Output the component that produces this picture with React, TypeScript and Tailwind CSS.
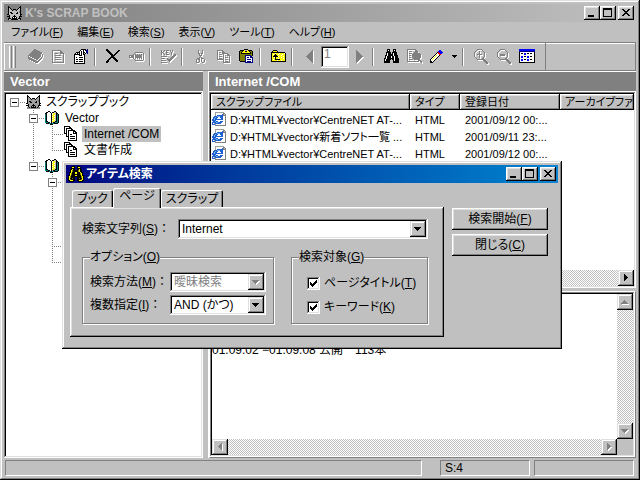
import type { ReactNode } from "react";
import clsx from "clsx";

const raised =
  "bg-[#c0c0c0] shadow-[inset_-1px_-1px_#000,inset_1px_1px_#fff,inset_-2px_-2px_#808080,inset_2px_2px_#dfdfdf]";
const frame =
  "bg-[#c0c0c0] shadow-[inset_-1px_-1px_#000,inset_1px_1px_#dfdfdf,inset_-2px_-2px_#808080,inset_2px_2px_#fff]";
const sunken =
  "p-[2px] shadow-[inset_-1px_-1px_#fff,inset_1px_1px_#808080,inset_-2px_-2px_#dfdfdf,inset_2px_2px_#000]";
const track =
  "bg-[repeating-conic-gradient(#c0c0c0_0_25%,#fff_0_50%)] bg-[length:2px_2px]";

const palette: Record<string, string> = {
  k: "#000000",
  g: "#808080",
  s: "#c0c0c0",
  a: "#a0a0a0",
  w: "#ffffff",
  y: "#ffff00",
  o: "#808000",
  b: "#0000ff",
  n: "#000080",
  r: "#ff0000",
  t: "#008080",
  l: "#6fb4f0",
  e: "#1f5fd0",
};

function PixelIcon({ rows, embossed }: { rows: string[]; embossed?: boolean }) {
  const width = Math.max(...rows.map((r) => r.length)) + 1;
  const height = rows.length + 1;
  const draw = (shift: number, color?: string) =>
    rows.flatMap((row, y) =>
      [...row].map((c, x) =>
        palette[c] ? (
          <rect
            key={`${shift}-${x}-${y}`}
            x={x + shift}
            y={y + shift}
            width="1"
            height="1"
            fill={color ?? palette[c]}
          />
        ) : null
      )
    );
  return (
    <svg
      width={width}
      height={height}
      viewBox={`0 0 ${width} ${height}`}
      shapeRendering="crispEdges"
      className="block shrink-0"
      aria-hidden="true"
    >
      {embossed && draw(1, "#ffffff")}
      {draw(0)}
    </svg>
  );
}

const icons = {
  cat: [
    ".k...........k.",
    ".kk.........kk.",
    ".ksk.......ksk.",
    ".kssk.kkk.kssk.",
    ".kssskgsgksssk.",
    ".kssssssssssgk.",
    ".kskksssssksgk.",
    ".ksskkssskkssk.",
    "kkssssssssssskk",
    "..kssssksssssk.",
    "kkkssskkkssskkk",
    "..ksskwkwkssk..",
    ".kkkskkkkkskkk.",
    ".ksskkkkkkkssk.",
  ],
  catTree: [
    ".k...........k.",
    ".kk.........kk.",
    ".kak.......kak.",
    ".kaak.kkk.kaak.",
    ".kaaakgagkaaak.",
    ".kaaaaaaaaaagk.",
    ".kakkaaaaakagk.",
    ".kaakkaaakkaak.",
    "kkaaaaaaaaaaakk",
    "..kaaaakaaaaak.",
    "kkkaaakkkaaakkk",
    "..kaakakakaak..",
    ".ggkakkkkkakgg.",
    ".gaagggggggaag.",
  ],
  book: [
    "......gg.......",
    ".....ggggg.....",
    "....gggggggg...",
    "...ggggggggggg.",
    "..gggggggggggg.",
    ".gggggggggggg.g",
    "ggggggggggggg.g",
    "g.ggggggggggg.g",
    "gg..gggggggg.g.",
    "gggg..ggggg.gg.",
    ".ggggg..gg.gg..",
    "...ggggg..gg...",
    ".....gggggg....",
    ".......ggg.....",
  ],
  page: [
    "ggggggggg...",
    "g.......gg..",
    "g.......ggg.",
    "g..ggg..gggg",
    "g..........g",
    "g..gggggg..g",
    "g..........g",
    "g..gggggg..g",
    "g..........g",
    "g..gggggg..g",
    "g..........g",
    "g..........g",
    "gggggggggggg",
  ],
  properties: [
    ".......kkkkk.n",
    "......kwwkwknn",
    ".....kwkwkwwnn",
    "..kkkkwkwkkwnn",
    ".kwkwkwkwk.k.n",
    "kkkkkkwkwkk...",
    "kwwwwkkkwwk...",
    "kwwwwwwwwwk...",
    "kwkwwkkkkwk...",
    "kwwwwwwwwwk...",
    "kwkkwkkkkwk...",
    "kwwwwwwwwwk...",
    "kwkkwkkkkwk...",
    "kwwwwwwwwwk...",
    "kkkkkkkkkkk...",
  ],
  cross: [
    "kk............",
    "kkk.........kk",
    ".kkk.......kk.",
    "..kkk.....kk..",
    "...kkk...kk...",
    "....kkk.kk....",
    ".....kkkk.....",
    ".....kkk......",
    "....kkkkk.....",
    "...kk..kkk....",
    "..kk....kkk...",
    ".kk......kkk..",
    "kkk.......kk..",
    "kk............",
  ],
  rename: [
    "......gggggggg.",
    ".....g........g",
    "....g.g.g.g.g.g",
    "ggggg.ggggggg.g",
    "g.ggg.ggggggg.g",
    "ggggg.ggggggg.g",
    "....g.g.g.g.g.g",
    ".....g........g",
    "......gggggggg.",
  ],
  key: [
    "g..g.ggg.g.g...",
    "g.g..g...g.g...",
    "gg...gg...g....",
    "g.g..g....g....",
    "g..g.ggg..g..gg",
    "............ggg",
    "gggggg.....ggg.",
    "..........ggg..",
    "gggg..g..ggg...",
    "......ggggg....",
    "ggggg..ggg.....",
    "........g......",
    "gggggg.........",
  ],
  cut: [
    "..g...g..",
    "..g...g..",
    "..g...g..",
    "..gg.gg..",
    "...g.g...",
    "...ggg...",
    "....g....",
    "...g.g...",
    ".ggg.ggg.",
    "g.gg.g..g",
    "g..g.g..g",
    "g..g.g..g",
    "ggg...gg.",
  ],
  copy: [
    "gggggg.......",
    "g....gg......",
    "g.gg.ggg.....",
    "g....gggggg..",
    "g.ggg.g...gg.",
    "g.....g.g.ggg",
    "g.ggg.g.....g",
    "g.....g.ggg.g",
    "g.ggg.g.....g",
    "ggggggg.ggg.g",
    "......g.....g",
    "......g.ggg.g",
    "......ggggggg",
  ],
  paste: [
    ".....kkkk.....",
    ".kkkky..ykkkk.",
    "kookyykkyykook",
    "kokyyyyyyyykok",
    "kokkkkkkkkkkok",
    "kooooooooooook",
    "kooooonnnnnnok",
    "kooooonwwwwnn.",
    "kooooonwnnwnnn",
    "kooooonwwwwwwn",
    "kooooonwnnnnwn",
    "kooooonwwwwwwn",
    ".kkkkknwnnnnwn",
    "......nnnnnnnn",
  ],
  folderUp: [
    "..kkkk.........",
    ".kyyyyk........",
    "kkkkkkkkkkkkkk.",
    "kyyywyyywyyyywk",
    "kywykyywyyywyyk",
    "kyykkkyyyywyyyk",
    "kykkkkkwyyyywyk",
    "kyywkyyyyywyyyk",
    "kyyykyywyyyywyk",
    "kywykkkkkyyyyyk",
    "kyyyyywyyywyyyk",
    "kkkkkkkkkkkkkkk",
  ],
  prev: [
    "......g",
    ".....gg",
    "....ggg",
    "...gggg",
    "..ggggg",
    ".gggggg",
    "ggggggg",
    ".gggggg",
    "..ggggg",
    "...gggg",
    "....ggg",
    ".....gg",
    "......g",
  ],
  next: [
    "g......",
    "gg.....",
    "ggg....",
    "gggg...",
    "ggggg..",
    "gggggg.",
    "ggggggg",
    "gggggg.",
    "ggggg..",
    "gggg...",
    "ggg....",
    "gg.....",
    "g......",
  ],
  binoculars: [
    "...kkk...kkk...",
    "...kwk...kwk...",
    "...kkk...kkk...",
    "..kkkkk.kkkkk..",
    "..kwkkk.kwkkk..",
    "..kwkkkkkwkkk..",
    ".kkwkkkkkwkkkk.",
    ".kwkkkkwkkwkkk.",
    ".kwkkkkwkkwkkk.",
    "kkwkkkkkkkwkkkk",
    "kwkkkkk.kkwkkkk",
    "kwkkkk...kwkkkk",
    "kkkkkk...kkkkkk",
    "kkkkkk...kkkkkk",
  ],
  binocularsGold: [
    "....kkk..kkk....",
    "...kyyk..kyyk...",
    "...kkkk..kkkk...",
    "..kkykk..kkykk..",
    "..kyokkkkkoykk..",
    "..kyokkkkkoykk..",
    ".kkykkkyykkkykk.",
    ".kyokkkyykkkoyk.",
    ".kyokkkkkkkkoyk.",
    "kkykkkkyykkkkykk",
    "kyokkkkkkkkkkoyk",
    "kyokkkk..kkkkoyk",
    "kykkokk..kkokkyk",
    "kyokkkk..kkkkoyk",
    "kkyyykk..kkyyykk",
    ".kkkkk....kkkkk.",
  ],
  pageFind: [
    "ggggggggg......",
    "g.......gg.....",
    "g.ggg...ggg....",
    "g......gggg....",
    "g.ggg.ggggggg..",
    "g....ggggggggg.",
    "g.gg.ggggggggg.",
    "g....ggggggggg.",
    "g.gg.ggggggggg.",
    "g.....ggggggg..",
    "g.gggg.gggggg..",
    "g..........ggg.",
    "gggggggggggg.gg",
    "..............g",
  ],
  pencil: [
    ".........bb...",
    "........bbbb..",
    ".......krbbbb.",
    "......kwrrbb..",
    ".....kwwwrr...",
    "....kwywwk....",
    "...kwywwk.....",
    "..kwywwk......",
    ".kwywwk.......",
    "kwywwk........",
    "kwwwk.........",
    "kkwk..........",
    "kkk...........",
  ],
  caret: ["kkkkk", ".kkk.", "..k.."],
  zoomIn: [
    "...ggggg.......",
    "..g.....g......",
    ".g...g...g.....",
    "g....g....g....",
    "g....g....g....",
    "g..ggggg..g....",
    "g....g....g....",
    "g....g....g....",
    ".g...g...g.....",
    "..g.....gg.....",
    "...gggggggg....",
    ".........ggg...",
    "..........ggg..",
    "...........ggg.",
    "............gg.",
  ],
  zoomOut: [
    "...ggggg.......",
    "..g.....g......",
    ".g.......g.....",
    "g.........g....",
    "g.........g....",
    "g..ggggg..g....",
    "g..ggggg..g....",
    "g.........g....",
    ".g.......g.....",
    "..g.....gg.....",
    "...gggggggg....",
    ".........ggg...",
    "..........ggg..",
    "...........ggg.",
    "............gg.",
  ],
  grid: [
    "bbbbbbbbbbbbbbbb",
    "bbbbbbbbbbbbbbbb",
    "nnnnnnnnnnnnnnnn",
    "kwwwwwwwwwwwwwwk",
    "kwkkwbbwkkwkkwwk",
    "kwwwwbbwwwwwwwwk",
    "kwwwwwwwwwwwwwwk",
    "kwbbwkkwbbwkkwwk",
    "kwbbwwwwbbwwwwwk",
    "kwwwwwwwwwwwwwwk",
    "kwbbwkkwbbwkkwwk",
    "kwbbwwwwbbwwwwwk",
    "kwwwwwwwwwwwwwwk",
    "kkkkkkkkkkkkkkkk",
  ],
  openBook: [
    "...kk....kk...",
    ".kkwwk.kkssk..",
    "kkwwwwkwyyskk.",
    "tkwwwwkwyysktk",
    "tkwwwwkyywsktk",
    "tkwwwwkwyysktk",
    "tkwwwwkyywsktk",
    "tkwwwwkwyysktk",
    "tkwwwwkyywsktk",
    "tkwwwwkwyysktk",
    "tkkwwwkyyskktk",
    "tttkkwkskktttk",
    ".kkkttkttkkkk.",
    ".....kkk......",
  ],
  pages: [
    "kkkkkk.......",
    "kwwwwkk......",
    "kwkkkkkk.....",
    "kwkwwwwkk....",
    "kwkwkkkkkkk..",
    "kwkwkwwwwkkk.",
    "kwkwkwwwwkwkk",
    "kkkwkwwwwkkkk",
    "..kwkwkkwwwwk",
    "..kwkwwwwwwwk",
    "..kkkwkkkkkwk",
    "....kwwwwwwwk",
    "....kwkkkkkwk",
    "....kwwwwwwwk",
    "....kkkkkkkkk",
  ],
  htmlFile: [
    "...aaaaaaaaa..",
    "...awwwwwwwgg.",
    "...awwwwwwegsg",
    "...aweeeeeeggg",
    "..eeellleeewwg",
    ".eeleewweeewwg",
    ".eleewwwweewwg",
    "eeleeeeeeeewwg",
    "eeeewwwwwwwwwg",
    ".eeleewweeewwg",
    "eeeelleeeewwwg",
    "ewaeeeeeewwwwg",
    "eeeawwwwwwwwwg",
    "...ggggggggggg",
  ],
  minimize: [".......", ".......", ".......", ".......", ".......", "......", "kkkkkk", "kkkkkk"],
  maximize: [
    "kkkkkkkkk",
    "kkkkkkkkk",
    "k.......k",
    "k.......k",
    "k.......k",
    "k.......k",
    "k.......k",
    "k.......k",
    "kkkkkkkkk",
  ],
  close: [
    "kk....kk",
    ".kk..kk.",
    "..kkkk..",
    "...kk...",
    "..kkkk..",
    ".kk..kk.",
    "kk....kk",
  ],
  check: [
    "......k",
    ".....kk",
    "k...kkk",
    "kk.kkk.",
    "kkkkk..",
    ".kkk...",
    "..k....",
  ],
  down: ["kkkkkkk", ".kkkkk.", "..kkk..", "...k..."],
  downGray: ["ggggggg", ".ggggg.", "..ggg..", "...g..."],
  upGray: ["...g...", "..ggg..", ".ggggg.", "ggggggg"],
  leftGray: ["...g", "..gg", ".ggg", "gggg", ".ggg", "..gg", "...g"],
  rightGray: ["g...", "gg..", "ggg.", "gggg", "ggg.", "gg..", "g..."],
  right: ["k...", "kk..", "kkk.", "kkkk", "kkk.", "kk..", "k..."],
};

type IconName = keyof typeof icons;

/* Label with its access key in brackets */
function Mnemonic({ text, k, colon }: { text: string; k: string; colon?: boolean }) {
  return (
    <>
      {text}(<u className="underline-offset-1">{k}</u>)
      {colon && <span className="[font-feature-settings:normal]">：</span>}
    </>
  );
}

function WindowButtons() {
  const buttons: [IconName, string][] = [
    ["minimize", "最小化"],
    ["maximize", "最大化"],
    ["close", "閉じる"],
  ];
  return (
    <div className="flex pr-[2px]">
      {buttons.map(([icon, label]) => (
        <button
          key={icon}
          aria-label={label}
          className={clsx(
            raised,
            "flex h-[14px] w-4 items-center justify-center",
            icon === "close" && "ml-[2px]"
          )}
        >
          <PixelIcon rows={icons[icon]} />
        </button>
      ))}
    </div>
  );
}

function ToolButton({
  icon,
  label,
  off,
  className = "w-[23px]",
}: {
  icon: IconName;
  label: string;
  off?: boolean;
  className?: string;
}) {
  return (
    <button
      aria-label={label}
      disabled={off}
      className={clsx("flex h-[22px] items-center justify-center", className)}
    >
      <PixelIcon rows={icons[icon]} embossed={off} />
    </button>
  );
}

function Separator() {
  return (
    <div className="flex w-[9px] pl-px">
      <div className="h-[18px] w-[2px] border-l border-r border-l-[#808080] border-r-white" />
    </div>
  );
}

function Toolbar() {
  return (
    <div className="h-[29px] border-t border-[#808080]">
      <div className="flex h-7 border-b border-r border-b-[#808080] border-r-[#808080] bg-[#c0c0c0] shadow-[inset_0_1px_#fff]">
        <div className="flex items-center border-l border-r border-l-white border-r-[#808080] pl-1 pr-[6px]">
          <div className="mr-2 flex gap-px">
            <div className="h-[22px] w-[3px] border-l border-r border-l-white border-r-[#808080]" />
            <div className="h-[22px] w-[3px] border-l border-r border-l-white border-r-[#808080]" />
          </div>
          <ToolButton icon="book" label="新規ブック" off />
          <ToolButton icon="page" label="新規ページ" off />
          <ToolButton icon="properties" label="プロパティ" />
          <Separator />
          <ToolButton icon="cross" label="削除" />
          <ToolButton icon="rename" label="名前の変更" off />
          <Separator />
          <ToolButton icon="key" label="キーワード" off />
          <Separator />
          <ToolButton icon="cut" label="切り取り" off />
          <ToolButton icon="copy" label="コピー" off />
          <ToolButton icon="paste" label="貼り付け" />
          <Separator />
          <ToolButton icon="folderUp" label="上へ" />
          <Separator />
          <ToolButton icon="prev" label="前へ" off className="w-[22px]" />
          <div className={clsx(sunken, "h-[22px] w-7 bg-white")}>
            <input
              aria-label="番号"
              defaultValue="1"
              disabled
              className="block h-3 w-full px-px text-xs leading-3 text-[#808080]"
            />
          </div>
          <ToolButton icon="next" label="次へ" off className="w-[22px]" />
          <Separator />
          <ToolButton icon="binoculars" label="検索" />
          <ToolButton icon="pageFind" label="ページ検索" off />
          <ToolButton icon="pencil" label="マーカー" />
          <ToolButton icon="caret" label="マーカーの色" className="w-3" />
          <Separator />
          <ToolButton icon="zoomIn" label="拡大" off />
          <ToolButton icon="zoomOut" label="縮小" off />
          <ToolButton icon="grid" label="一覧" />
        </div>
      </div>
    </div>
  );
}

type Line = "none" | "root" | "through" | "corner" | "open" | "openLast" | "bar";

/* One indent step of the tree: dotted lines and the expand box */
function TreeCell({ line }: { line: Line }) {
  const box = line === "root" || line === "open" || line === "openLast";
  const up = line !== "none" && line !== "root";
  const down = line === "through" || line === "open" || line === "bar";
  const across = line !== "none" && line !== "bar";
  const dots = { stroke: "#808080", strokeDasharray: "1 1" };
  return (
    <svg width="19" height="16" shapeRendering="crispEdges" className="block shrink-0">
      {up && <path d="M7.5 0V8" {...dots} />}
      {down && <path d="M7.5 8V16" {...dots} />}
      {across && <path d="M7 8.5H18" {...dots} />}
      {box && (
        <>
          <rect x="3.5" y="4.5" width="8" height="8" fill="#fff" stroke="#808080" />
          <path d="M5 8.5H10" stroke="#000" />
        </>
      )}
    </svg>
  );
}

const treeRows: { lines: Line[]; icon?: IconName; label?: string; selected?: boolean }[] = [
  { lines: ["root"], icon: "catTree", label: "スクラップブック" },
  { lines: ["none", "open"], icon: "openBook", label: "Vector" },
  { lines: ["none", "bar", "through"], icon: "pages", label: "Internet /COM", selected: true },
  { lines: ["none", "bar", "corner"], icon: "pages", label: "文書作成" },
  { lines: ["none", "openLast"], icon: "openBook" },
  { lines: ["none", "none", "open"] },
  { lines: ["none", "none", "bar"] },
  { lines: ["none", "none", "bar"] },
  { lines: ["none", "none", "bar"] },
  { lines: ["none", "none", "through"] },
  { lines: ["none", "none", "corner"] },
];

function Tree() {
  return (
    <ul className={clsx(sunken, "flex-1 bg-white")}>
      {treeRows.map((row, i) => (
        <li key={i} className="flex h-4 pl-px">
          {row.lines.map((line, j) => (
            <TreeCell key={j} line={line} />
          ))}
          {row.icon && (
            <div className="flex w-[18px] items-center">
              <PixelIcon rows={icons[row.icon]} />
            </div>
          )}
          {row.label && (
            <span className={clsx("px-[2px] leading-4", row.selected && "bg-[#c0c0c0]")}>
              {row.label}
            </span>
          )}
        </li>
      ))}
    </ul>
  );
}

function ScrollButton({ icon, label, off }: { icon: IconName; label: string; off?: boolean }) {
  return (
    <button
      aria-label={label}
      disabled={off}
      className={clsx(frame, "flex size-4 shrink-0 items-center justify-center")}
    >
      <PixelIcon rows={icons[icon]} embossed={off} />
    </button>
  );
}

const files = [
  { name: "D:¥HTML¥vector¥CentreNET AT-...", type: "HTML", date: "2001/09/12 00:..." },
  { name: "D:¥HTML¥vector¥新着ソフト一覧 ...", type: "HTML", date: "2001/09/11 23:..." },
  { name: "D:¥HTML¥vector¥CentreNET AT-...", type: "HTML", date: "2001/09/12 00:..." },
];

function FileList() {
  return (
    <div className={clsx(sunken, "flex h-[196px] flex-col bg-white")}>
      <div className="flex-1 overflow-hidden">
        <table className="w-full table-fixed whitespace-nowrap text-[11px]">
          <colgroup>
            <col className="w-[199px]" />
            <col className="w-[50px]" />
            <col className="w-[100px]" />
            <col />
          </colgroup>
          <thead>
            <tr>
              {["スクラップファイル", "タイプ", "登録日付", "アーカイブファ"].map((h) => (
                <th key={h} className="p-0 pb-px text-left font-normal">
                  <div className={clsx(raised, "h-4 overflow-hidden pl-[5px] leading-4")}>{h}</div>
                </th>
              ))}
            </tr>
          </thead>
          <tbody>
            {files.map((f, i) => (
              <tr key={i} className="h-[17px] leading-4">
                <td className="p-0">
                  <div className="flex items-center gap-[3px] pl-px">
                    <PixelIcon rows={icons.htmlFile} />
                    {f.name}
                  </div>
                </td>
                <td className="p-0 pl-[5px]">{f.type}</td>
                <td className="p-0 pl-[5px]">{f.date}</td>
                <td />
              </tr>
            ))}
          </tbody>
        </table>
      </div>
      <div className={clsx(track, "flex justify-between")}>
        <ScrollButton icon="leftGray" label="左へ" />
        <ScrollButton icon="right" label="右へ" />
      </div>
    </div>
  );
}

function Preview() {
  return (
    <div className="mt-[3px] flex flex-1 flex-col border border-b-[#808080] border-l-white border-r-[#808080] border-t-white">
      <div className={clsx(sunken, "flex flex-1 flex-col bg-white")}>
        <div className="flex flex-1">
          <p className="flex-1 pt-12 leading-4">01.09.02 −01.09.08 公開　113本</p>
          <div className={clsx(track, "flex flex-col justify-between")}>
            <ScrollButton icon="upGray" label="上へ" off />
            <ScrollButton icon="downGray" label="下へ" off />
          </div>
        </div>
        <div className="flex bg-[#c0c0c0] pr-4">
          <div className={clsx(track, "flex flex-1 justify-between")}>
            <ScrollButton icon="leftGray" label="左へ" off />
            <ScrollButton icon="rightGray" label="右へ" off />
          </div>
        </div>
      </div>
    </div>
  );
}

function Caption({ children }: { children: ReactNode }) {
  return (
    <h2 className="h-[21px] border-b border-t border-white bg-[#808080] pl-[6px] text-[13px] font-bold leading-[19px] text-white">
      {children}
    </h2>
  );
}

function Combo({
  id,
  value,
  disabled,
  className,
}: {
  id: string;
  value: string;
  disabled?: boolean;
  className?: string;
}) {
  return (
    <div className={clsx(sunken, "relative flex h-5 bg-white", className)}>
      <select
        id={id}
        disabled={disabled}
        className="h-4 w-full appearance-none bg-white pl-[2px] leading-4 opacity-100 disabled:text-[#808080]"
      >
        <option>{value}</option>
      </select>
      <span
        className={clsx(
          frame,
          "pointer-events-none absolute right-[2px] top-[2px] flex size-4 items-center justify-center"
        )}
      >
        <PixelIcon rows={disabled ? icons.downGray : icons.down} embossed={disabled} />
      </span>
    </div>
  );
}

function Group({
  legend,
  className,
  children,
}: {
  legend: ReactNode;
  className?: string;
  children: ReactNode;
}) {
  return (
    <fieldset
      className={clsx(
        "border border-[#808080] px-[7px] shadow-[1px_1px_#fff,inset_1px_1px_#fff]",
        className
      )}
    >
      <legend className="h-3 bg-[#c0c0c0] leading-3">{legend}</legend>
      {children}
    </fieldset>
  );
}

function CheckBox({ label, k }: { label: string; k: string }) {
  return (
    <label className="flex h-6 items-center gap-1">
      <span className={clsx(sunken, "relative size-[13px] bg-white")}>
        <input type="checkbox" defaultChecked className="peer absolute inset-0 appearance-none" />
        <span className="pointer-events-none absolute left-[3px] top-[3px] hidden peer-checked:block">
          <PixelIcon rows={icons.check} />
        </span>
      </span>
      <span>
        <Mnemonic text={label} k={k} />
      </span>
    </label>
  );
}

function SearchDialog() {
  const tab =
    "bg-[#c0c0c0] text-center shadow-[inset_1px_1px_#fff,inset_-1px_0_#000,inset_-2px_0_#808080]";
  return (
    <section
      role="dialog"
      aria-label="アイテム検索"
      className={clsx(frame, "absolute left-[62px] top-[161px] w-[500px] p-1 pb-3")}
    >
      <header className="flex h-[18px] items-center gap-px bg-gradient-to-r from-[#000080] to-[#1084d0] pl-[2px]">
        <PixelIcon rows={icons.binocularsGold} />
        <h2 className="flex-1 font-bold text-white">アイテム検索</h2>
        <WindowButtons />
      </header>

      <div className="flex items-start gap-2 pl-1 pr-[10px] pt-[5px]">
        <div className="w-[374px]">
          <div role="tablist" className="flex items-end pl-[2px]">
            <button role="tab" className={clsx(tab, "h-[17px] w-[41px] rounded-t-xs")}>
              ブック
            </button>
            <button
              role="tab"
              aria-selected="true"
              className={clsx(tab, "relative -mb-px h-5 w-12 rounded-t-xs pb-1")}
            >
              ページ
            </button>
            <button role="tab" className={clsx(tab, "h-[17px] w-[62px] rounded-t-xs")}>
              スクラップ
            </button>
          </div>
          <div className={clsx(raised, "px-3 pb-[13px] pt-3 pr-4")}>
            <div className="flex items-center">
              <label htmlFor="keyword" className="w-24 whitespace-nowrap">
                <Mnemonic text="検索文字列" k="S" colon />
              </label>
              <Combo id="keyword" value="Internet" className="flex-1" />
            </div>
            <div className="mt-3 flex items-stretch justify-between">
              <Group legend={<Mnemonic text="オプション" k="O" />} className="pb-2">
                <div className="mt-[9px] flex items-center">
                  <label htmlFor="method" className="w-20 whitespace-nowrap">
                    <Mnemonic text="検索方法" k="M" colon />
                  </label>
                  <Combo id="method" value="曖昧検索" disabled className="w-24" />
                </div>
                <div className="mt-[3px] flex items-center">
                  <label htmlFor="multi" className="w-20 whitespace-nowrap">
                    <Mnemonic text="複数指定" k="I" colon />
                  </label>
                  <Combo id="multi" value="AND (かつ)" className="w-24" />
                </div>
              </Group>
              <Group legend={<Mnemonic text="検索対象" k="G" />} className="pb-1">
                <div className="w-[121px] pl-2 pt-2">
                  <CheckBox label="ページタイトル" k="T" />
                  <CheckBox label="キーワード" k="K" />
                </div>
              </Group>
            </div>
          </div>
        </div>
        <div className="flex flex-1 flex-col gap-1 pt-5">
          <button className={clsx(raised, "h-[22px]")}>
            <Mnemonic text="検索開始" k="F" />
          </button>
          <button className={clsx(raised, "h-[22px]")}>
            <Mnemonic text="閉じる" k="C" />
          </button>
        </div>
      </div>
    </section>
  );
}

const menus = [
  ["ファイル", "F"],
  ["編集", "E"],
  ["検索", "S"],
  ["表示", "V"],
  ["ツール", "T"],
  ["ヘルプ", "H"],
];

export default function App() {
  return (
    <div
      className={clsx(
        frame,
        "relative flex min-h-screen flex-col p-1 font-['Liberation_Sans','Noto_Sans_CJK_JP',sans-serif] text-xs text-black [font-feature-settings:'palt']"
      )}
    >
      {/* Title bar */}
      <header className="flex h-[18px] items-center gap-[2px] bg-gradient-to-r from-[#808080] to-[#c0c0c0] pl-[3px]">
        <PixelIcon rows={icons.cat} />
        <h1 className="flex-1 font-bold text-[#c0c0c0]">K's SCRAP BOOK</h1>
        <WindowButtons />
      </header>

      {/* Menu */}
      <nav className="flex h-5 items-center text-[11px]">
        {menus.map(([text, k]) => (
          <button key={k} className="px-[7px] leading-4">
            <Mnemonic text={text} k={k} />
          </button>
        ))}
      </nav>

      <Toolbar />

      {/* Panes */}
      <main className="flex flex-1 gap-[5px]">
        <div className="flex w-[199px] shrink-0 flex-col">
          <Caption>Vector</Caption>
          <Tree />
        </div>
        <div className="flex min-w-0 flex-1 flex-col border-l border-white">
          <Caption>Internet /COM</Caption>
          <FileList />
          <Preview />
        </div>
      </main>

      {/* Status bar */}
      <footer className="mt-[2px] flex h-4 gap-1 pl-px pr-[2px] leading-[14px]">
        <div className="mr-[14px] flex-1 border border-b-white border-l-[#808080] border-r-white border-t-[#808080]" />
        <div className="w-[90px] border border-b-white border-l-[#808080] border-r-white border-t-[#808080] pl-1">
          S:4
        </div>
        <div className="w-[100px] border border-b-white border-l-[#808080] border-r-white border-t-[#808080]" />
      </footer>

      <SearchDialog />
    </div>
  );
}
